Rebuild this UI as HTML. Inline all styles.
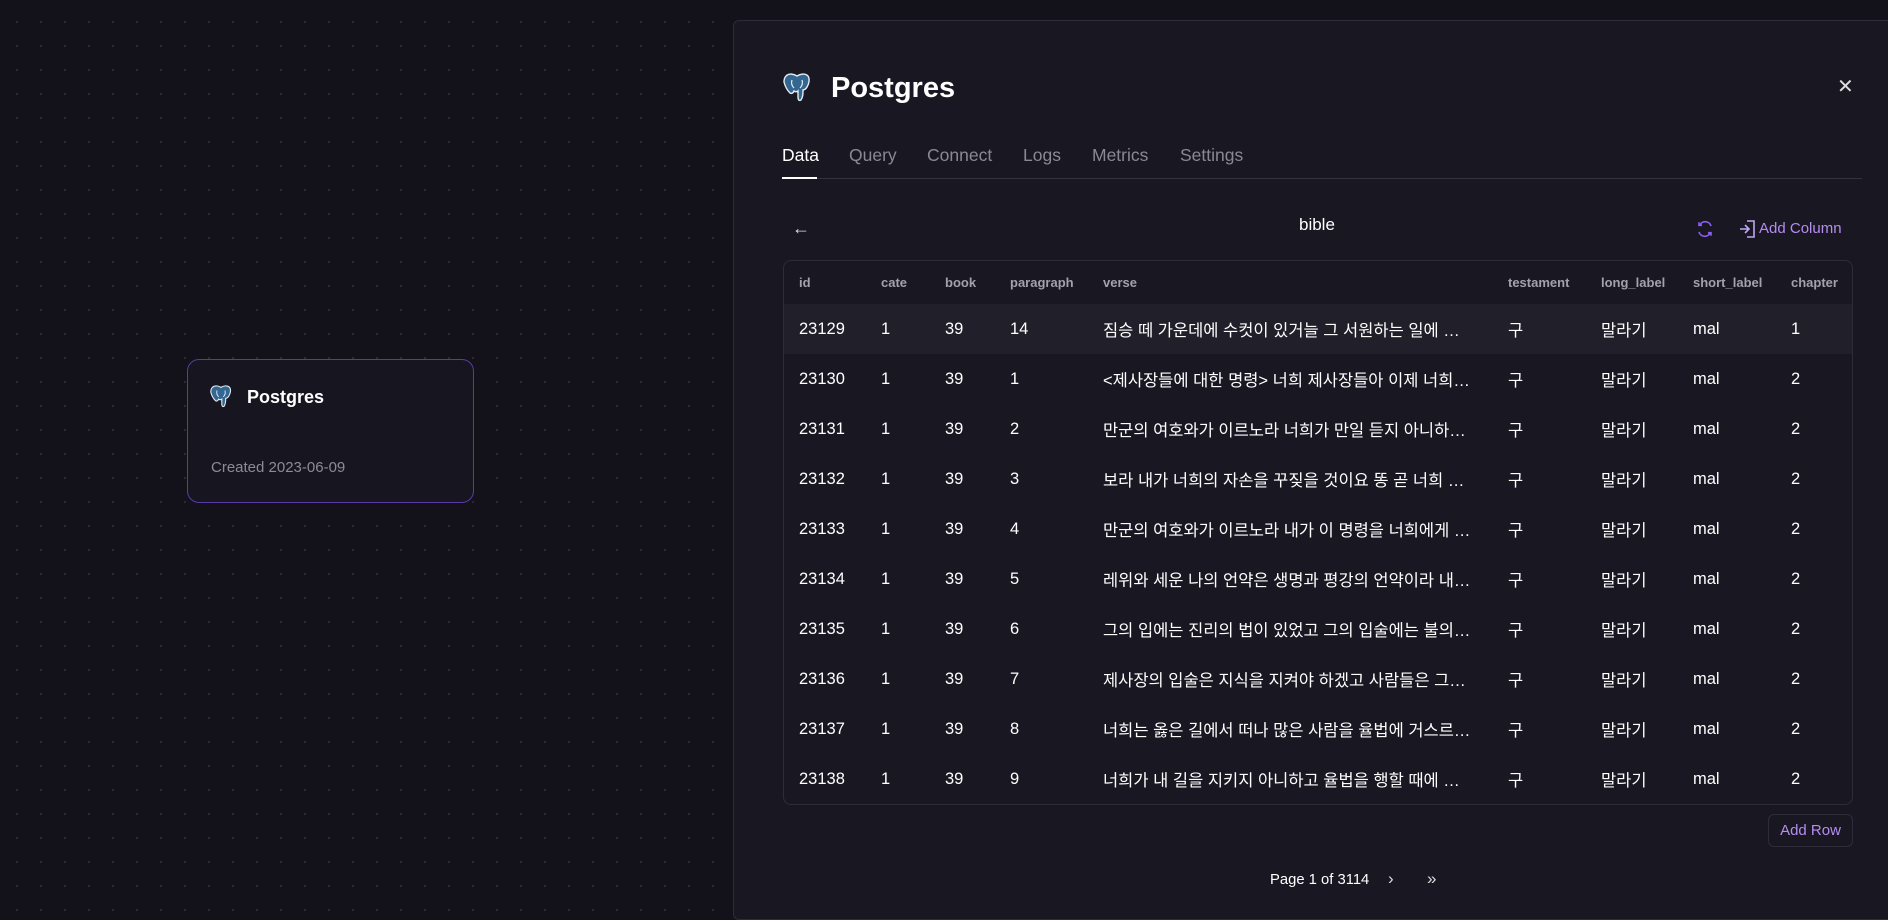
<!DOCTYPE html>
<html><head><meta charset="utf-8"><style>
*{box-sizing:border-box;margin:0;padding:0}
body{width:1888px;height:892px;overflow:hidden;background:#13111a;font-family:"Liberation Sans","Noto Sans CJK KR",sans-serif;color:#fff;position:relative;
background-image:radial-gradient(circle,#2c2a35 1px,transparent 1.3px);background-size:24px 24px;background-position:5px 10px}
.card{position:absolute;left:187px;top:359px;width:287px;height:144px;border:1px solid #5b3aa8;border-radius:12px;background:#17151f}
.card .t{position:absolute;left:59px;top:27px;font-weight:bold;font-size:18px}
.card .c{position:absolute;left:23px;top:99px;font-size:15px;color:#8d8b96}
.panel{position:absolute;left:733px;top:20px;width:1170px;height:900px;background:#191722;border:1px solid #2e2c38;border-radius:6px}
.abs{position:absolute}
.title{left:97px;top:51px;font-size:29px;font-weight:bold}
.close{left:1103px;top:53px;font-size:20px;color:#ddd}
.tab{top:124px;font-size:17.5px;color:#8a8893}
.tabline{left:48px;top:157px;width:1080px;height:1px;background:#34323d}
.tabul{left:48px;top:156px;width:35px;height:2px;background:#fff}
table{position:absolute;left:49px;top:239px;width:1070px;border:1px solid #2e2c38;border-radius:8px;border-collapse:separate;border-spacing:0;overflow:hidden}
th{height:43px;text-align:left;font-size:13px;color:#a3a1ab;font-weight:bold;padding-left:15px}
td{height:50px;font-size:16.5px;padding-left:15px;white-space:nowrap}
tr.hl td{background:#211f2a}
.v{max-width:368px;overflow:hidden;text-overflow:ellipsis;display:block}
.btn{left:1034px;top:793px;width:85px;height:33px;border:1px solid #2e2c38;border-radius:6px;color:#b58cf0;font-size:15px;text-align:center;line-height:31px}
</style></head><body>
<div class="card">
<svg class="abs" style="left:22px;top:24px" width="22" height="24" viewBox="0 0 28 30"><path d="M3 4C6 1 11 2 14 4c3-2 8-3 11 0 2 3 1 8-1 11-1 2-3 3-4 3 0 4 0 7-2 10-2 1-3 0-3-3v-6c-1 1-3 1-4 0-1 2-2 3-4 2C4 18 2 14 1 10 1 7 2 5 3 4z" fill="#336791" stroke="#e3ecf3" stroke-width="1.4"/><path d="M9 8c-1 3 0 6 2 8M19 8c1 3 0 6-2 8" stroke="#e3ecf3" stroke-width="1.2" fill="none"/></svg>
<div class="t">Postgres</div><div class="c">Created 2023-06-09</div></div>
<div class="panel">
<svg class="abs" style="left:49px;top:51px" width="28" height="30" viewBox="0 0 28 30"><path d="M3 4C6 1 11 2 14 4c3-2 8-3 11 0 2 3 1 8-1 11-1 2-3 3-4 3 0 4 0 7-2 10-2 1-3 0-3-3v-6c-1 1-3 1-4 0-1 2-2 3-4 2C4 18 2 14 1 10 1 7 2 5 3 4z" fill="#336791" stroke="#e3ecf3" stroke-width="1.4"/><path d="M9 8c-1 3 0 6 2 8M19 8c1 3 0 6-2 8" stroke="#e3ecf3" stroke-width="1.2" fill="none"/></svg>
<div class="abs title">Postgres</div>
<div class="abs close">✕</div>
<div class="abs tab" style="left:48px;color:#fff">Data</div>
<div class="abs tab" style="left:115px">Query</div>
<div class="abs tab" style="left:193px">Connect</div>
<div class="abs tab" style="left:289px">Logs</div>
<div class="abs tab" style="left:358px">Metrics</div>
<div class="abs tab" style="left:446px">Settings</div>
<div class="abs tabline"></div><div class="abs tabul"></div>
<div class="abs" style="left:58px;top:197px;font-size:18px;color:#ddd">←</div>
<div class="abs" style="left:565px;top:194px;font-size:17px">bible</div>
<svg class="abs" style="left:962px;top:199px" width="18" height="18" viewBox="0 0 24 24" fill="none" stroke="#8b5cf6" stroke-width="2.2"><path d="M20 8A8 8 0 0 0 5 7M4 3v4h4M4 16a8 8 0 0 0 15 1M20 21v-4h-4"/></svg>
<svg class="abs" style="left:1005px;top:198px" width="18" height="20" viewBox="0 0 18 20" fill="none" stroke="#c4a5f5" stroke-width="1.6"><path d="M8 2h7v16H8M1 10h9M6 6l4 4-4 4"/></svg>
<div class="abs" style="left:1025px;top:199px;font-size:15px;color:#b58cf0">Add Column</div>
<table>
<tr><th style="width:82px">id</th><th style="width:64px">cate</th><th style="width:65px">book</th><th style="width:93px">paragraph</th><th style="width:405px">verse</th><th style="width:93px">testament</th><th style="width:92px">long_label</th><th style="width:98px">short_label</th><th>chapter</th></tr>
<tr class="hl"><td>23129</td><td>1</td><td>39</td><td>14</td><td><span class="v">짐승 떼 가운데에 수컷이 있거늘 그 서원하는 일에 흠 있는 것으로</span></td><td>구</td><td>말라기</td><td>mal</td><td>1</td></tr>
<tr><td>23130</td><td>1</td><td>39</td><td>1</td><td><span class="v">&lt;제사장들에 대한 명령&gt; 너희 제사장들아 이제 너희에게</span></td><td>구</td><td>말라기</td><td>mal</td><td>2</td></tr>
<tr><td>23131</td><td>1</td><td>39</td><td>2</td><td><span class="v">만군의 여호와가 이르노라 너희가 만일 듣지 아니하며 마음에</span></td><td>구</td><td>말라기</td><td>mal</td><td>2</td></tr>
<tr><td>23132</td><td>1</td><td>39</td><td>3</td><td><span class="v">보라 내가 너희의 자손을 꾸짖을 것이요 똥 곧 너희 절기의</span></td><td>구</td><td>말라기</td><td>mal</td><td>2</td></tr>
<tr><td>23133</td><td>1</td><td>39</td><td>4</td><td><span class="v">만군의 여호와가 이르노라 내가 이 명령을 너희에게 내린 것은</span></td><td>구</td><td>말라기</td><td>mal</td><td>2</td></tr>
<tr><td>23134</td><td>1</td><td>39</td><td>5</td><td><span class="v">레위와 세운 나의 언약은 생명과 평강의 언약이라 내가 이것으로</span></td><td>구</td><td>말라기</td><td>mal</td><td>2</td></tr>
<tr><td>23135</td><td>1</td><td>39</td><td>6</td><td><span class="v">그의 입에는 진리의 법이 있었고 그의 입술에는 불의함이</span></td><td>구</td><td>말라기</td><td>mal</td><td>2</td></tr>
<tr><td>23136</td><td>1</td><td>39</td><td>7</td><td><span class="v">제사장의 입술은 지식을 지켜야 하겠고 사람들은 그의 입에서</span></td><td>구</td><td>말라기</td><td>mal</td><td>2</td></tr>
<tr><td>23137</td><td>1</td><td>39</td><td>8</td><td><span class="v">너희는 옳은 길에서 떠나 많은 사람을 율법에 거스르게 하는</span></td><td>구</td><td>말라기</td><td>mal</td><td>2</td></tr>
<tr><td>23138</td><td>1</td><td>39</td><td>9</td><td><span class="v">너희가 내 길을 지키지 아니하고 율법을 행할 때에 사람에게</span></td><td>구</td><td>말라기</td><td>mal</td><td>2</td></tr>
</table>
<div class="abs btn">Add Row</div>
<div class="abs" style="left:536px;top:851px;font-size:14.8px">Page 1 of 3114</div>
<div class="abs" style="left:654px;top:848px;font-size:17px;color:#ddd">›</div>
<div class="abs" style="left:693px;top:848px;font-size:17px;color:#ddd">»</div>
</div>
</body></html>
